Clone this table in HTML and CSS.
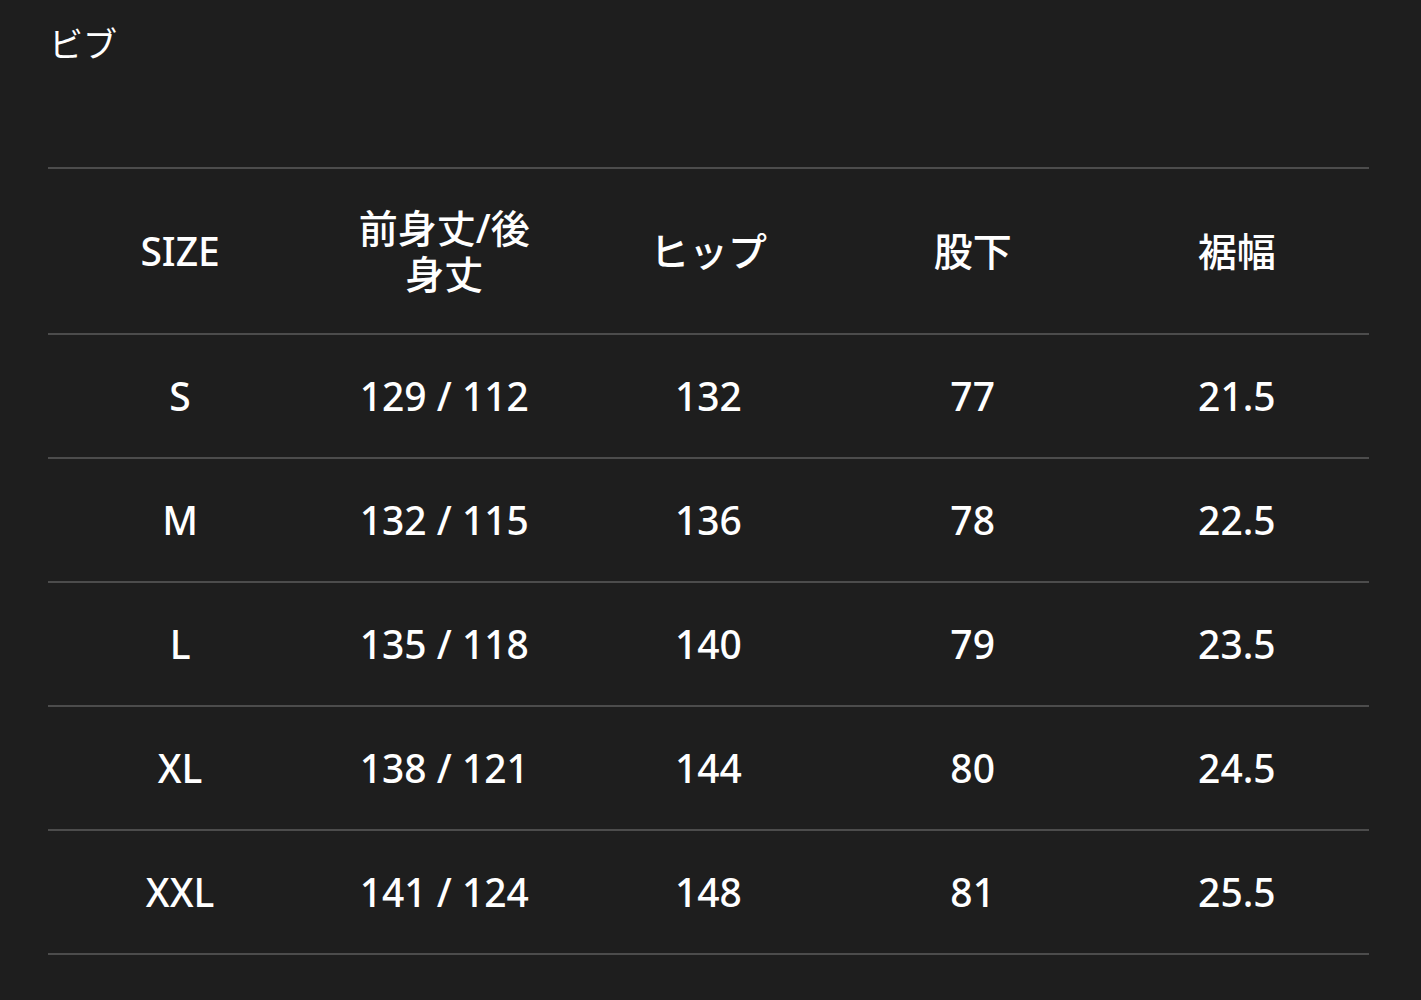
FILE: index.html
```html
<!DOCTYPE html>
<html lang="ja">
<head>
<meta charset="utf-8">
<link rel="stylesheet" href="styles.css">
</head>
<body>
<div class="page">
  <div class="title">ビブ</div>
  <table class="size-table">
    <thead>
      <tr>
        <th>SIZE</th>
        <th>前身丈/後身丈</th>
        <th>ヒップ</th>
        <th>股下</th>
        <th>裾幅</th>
      </tr>
    </thead>
    <tbody>
      <tr><td>S</td><td>129 / 112</td><td>132</td><td>77</td><td>21.5</td></tr>
      <tr><td>M</td><td>132 / 115</td><td>136</td><td>78</td><td>22.5</td></tr>
      <tr><td>L</td><td>135 / 118</td><td>140</td><td>79</td><td>23.5</td></tr>
      <tr><td>XL</td><td>138 / 121</td><td>144</td><td>80</td><td>24.5</td></tr>
      <tr><td>XXL</td><td>141 / 124</td><td>148</td><td>81</td><td>25.5</td></tr>
    </tbody>
  </table>
</div>
</body>
</html>
```

FILE: styles.css
```css
html, body {
  margin: 0;
  padding: 0;
  background: #1e1e1e;
}
body {
  color: #ffffff;
  font-family: "Noto Sans", "Noto Sans CJK JP", sans-serif;
}
.page {
  padding: 22px 52px 0 48px;
}
.title {
  font-family: "Noto Sans CJK JP", sans-serif;
  font-size: 34px;
  line-height: 41px;
  padding-left: 1px;
  margin-bottom: 104px;
}
.size-table {
  width: 1321px;
  border-collapse: collapse;
  table-layout: fixed;
  border-top: 2px solid #4c4c4c;
}
.size-table th,
.size-table td {
  text-align: center;
  vertical-align: middle;
  font-size: 39px;
  line-height: 46px;
  font-weight: 500;
  border-bottom: 2px solid #4c4c4c;
}
.size-table th {
  padding: 36px 44px;
}
.size-table td {
  padding: 38px 40px;
}
```
